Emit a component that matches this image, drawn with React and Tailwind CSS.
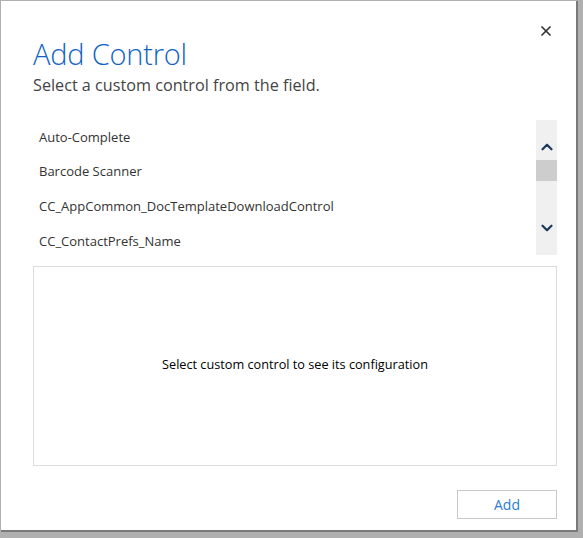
import { X, ChevronUp, ChevronDown } from "lucide-react";

const controls = [
  "Auto-Complete",
  "Barcode Scanner",
  "CC_AppCommon_DocTemplateDownloadControl",
  "CC_ContactPrefs_Name",
];

export default function App() {
  return (
    <div
      className="h-[538px] w-[583px] overflow-hidden bg-[#b0b0b0] pl-px pt-px"
      style={{ fontFamily: '"Open Sans", "Noto Sans", sans-serif' }}
    >
      <div className="relative flex h-[531px] w-[577px] flex-col border-b-2 border-r-2 border-[#7a7a7a] bg-white px-8">
        {/* Close */}
        <button className="absolute right-[22px] top-[22px] text-[#333]">
          <X size={16} strokeWidth={2.6} />
        </button>

        <h1 className="mt-[34px] text-[29px] font-light leading-[38px] tracking-[-0.2px] text-[#1364c2]">
          Add Control
        </h1>
        <p className="mt-[1px] text-[16.2px] leading-[22px] text-[#444]">
          Select a custom control from the field.
        </p>

        {/* List */}
        <div className="mt-[24px] flex h-[135px] w-[524px]">
          <ul className="flex-1">
            {controls.map((c) => (
              <li
                key={c}
                className="flex h-[34.7px] items-center pl-[6px] text-[13px] text-[#333]"
              >
                {c}
              </li>
            ))}
          </ul>
          <div className="flex w-[21px] flex-col items-center bg-[#f0f0f0] pt-[18px]">
            <ChevronUp size={18} strokeWidth={3} className="text-[#1d3a5c]" />
            <div className="mt-[4px] h-[21px] w-[21px] bg-[#cdcdcd]" />
            <ChevronDown size={18} strokeWidth={3} className="mt-[38px] text-[#1d3a5c]" />
          </div>
        </div>

        {/* Configuration box */}
        <div className="mt-[11px] flex h-[200px] w-[524px] items-center justify-center border border-[#dcdcdc] pb-[3px] text-[12.7px] text-black">
          Select custom control to see its configuration
        </div>

        <div className="mt-[24px] flex w-[524px] justify-end">
          <button className="h-[29px] w-[100px] border border-[#c8c8c8] text-[14px] text-[#2b7cd3]">
            Add
          </button>
        </div>
      </div>
    </div>
  );
}
